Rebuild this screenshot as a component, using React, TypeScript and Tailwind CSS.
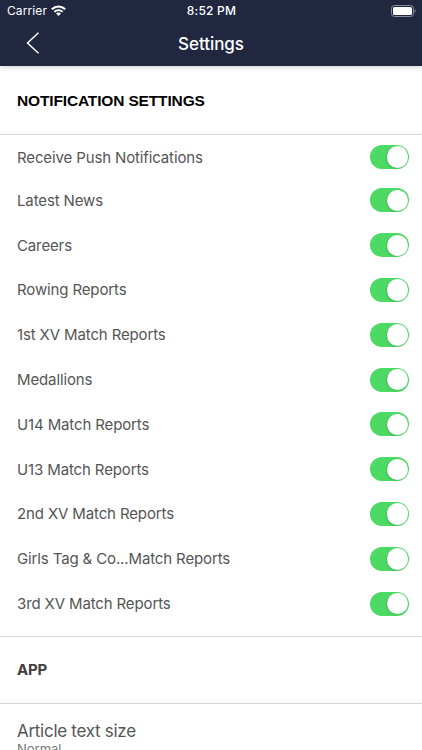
import { clsx } from 'clsx'

interface ToggleRowInterface {
  label: string
  first?: boolean
}

const channels = [
  'Latest News',
  'Careers',
  'Rowing Reports',
  '1st XV Match Reports',
  'Medallions',
  'U14 Match Reports',
  'U13 Match Reports',
  '2nd XV Match Reports',
  'Girls Tag & Co...Match Reports',
  '3rd XV Match Reports',
]

const StatusBar = () => (
  <div className="grid h-[22px] grid-cols-3 items-center pl-[7px] pr-[6px] text-[12px] leading-none">
    <div className="flex items-center gap-[4px]">
      <span className="text-[12px] tracking-[0.1px]">Carrier</span>
      <svg className="-mt-px" width="15" height="11" viewBox="0 0 15 11" fill="none" stroke="white" strokeWidth="2">
        <path d="M0.8 4.3C4.6 0.5 10.4 0.5 14.2 4.3" />
        <path d="M3.3 6.9C5.7 4.6 9.3 4.6 11.7 6.9" />
        <path d="M7.5 11L5.1 8.5C6.5 7.2 8.5 7.2 9.9 8.5Z" fill="white" stroke="none" />
      </svg>
    </div>
    <span className="text-center font-medium tracking-[0.2px]">8:52 PM</span>
    <svg className="-mt-px justify-self-end" width="25" height="12" viewBox="0 0 25 12" fill="none">
      <rect x="0.5" y="0.5" width="22" height="11" rx="3" stroke="#8b8e9e" />
      <rect x="2" y="2" width="19" height="8" rx="1.6" fill="white" />
      <path d="M23.7 4C25 4.5 25 7.5 23.7 8Z" fill="#8b8e9e" />
    </svg>
  </div>
)

const Toggle = () => (
  <button role="switch" aria-checked="true" className="flex h-6 w-[39px] items-center justify-end rounded-full bg-[#4cd964] pr-px">
    <span className="size-[21.5px] rounded-full bg-white shadow-[-1px_1px_2px_rgba(0,0,0,0.12)]" />
  </button>
)

const ToggleRow = ({ label, first }: ToggleRowInterface) => (
  <li className={clsx('flex items-center justify-between pl-[17px] pr-[13px]', first ? 'h-[43.6px] pt-[1.4px]' : 'h-[44.8px]')}>
    <span className={clsx('text-[15px] tracking-[-0.13px] text-[#555]', first ? 'pt-[3.4px]' : 'pt-[1px]')}>{label}</span>
    <Toggle />
  </li>
)

const App = () => {
  return (
    <div className="flex h-[750px] w-[422px] flex-col overflow-hidden bg-white font-['Inter','Liberation_Sans',sans-serif]">
      <header className="z-10 h-[65.5px] shrink-0 bg-[#20273f] text-white shadow-[0_1px_5px_rgba(0,0,0,0.2)]">
        <StatusBar />
        <div className="grid h-[43px] grid-cols-3 items-center">
          <button aria-label="Back" className="pb-[2px] pl-[26px]">
            <svg width="14" height="22" viewBox="0 0 14 22" fill="none" stroke="white" strokeWidth="1.5">
              <path d="M12.5 0.8L1.5 11L12.5 21.2" />
            </svg>
          </button>
          <h1 className="pt-[2px] text-center text-[17px] font-medium tracking-[-0.05px]">Settings</h1>
        </div>
      </header>
      <h2 className="flex h-[69px] shrink-0 items-center border-b border-[#d8d8d8] pl-[17px] pt-[3px] font-['Liberation_Sans',sans-serif] text-[15.5px] font-bold tracking-[-0.15px] text-black">
        NOTIFICATION SETTINGS
      </h2>
      <ul className="h-[502px] shrink-0 border-b border-[#d8d8d8]">
        <ToggleRow label="Receive Push Notifications" first />
        {channels.map((channel) => (
          <ToggleRow key={channel} label={channel} />
        ))}
      </ul>
      <h2 className="flex h-[67px] shrink-0 items-center border-b border-[#d8d8d8] pl-[17px] pt-px text-[15px] font-bold tracking-[-0.2px] text-[#404040]">APP</h2>
      <div className="shrink-0 pl-[17px] pt-[16px]">
        <p className="text-[17px] leading-[22px] tracking-[-0.28px] text-[#555]">Article text size</p>
        <p className="text-[13px] leading-[15px] text-[#777]">Normal</p>
      </div>
    </div>
  )
}
export default App
